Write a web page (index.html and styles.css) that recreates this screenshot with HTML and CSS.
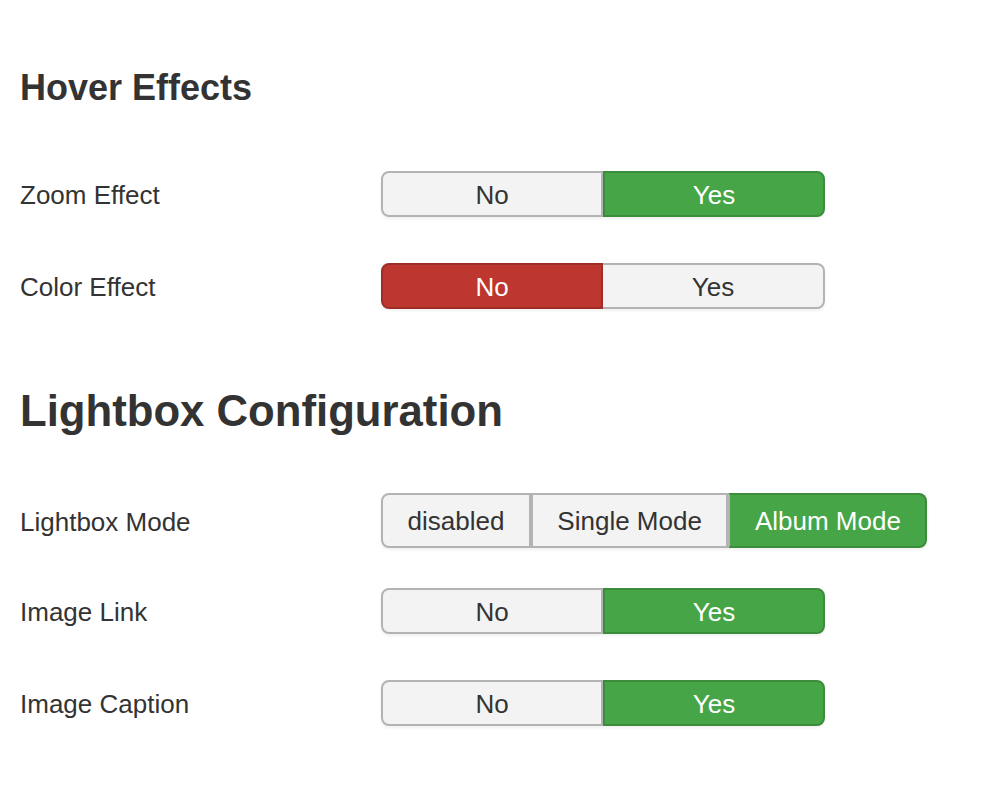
FILE: index.html
```html
<!DOCTYPE html>
<html lang="en">
<head>
    <meta charset="UTF-8">
    <meta name="viewport" content="width=device-width, initial-scale=1.0">
    <title>Gallery Options</title>
    <link rel="stylesheet" href="styles.css">
</head>
<body>

<form id="optionsForm">
    <h3 class="section-title">Hover Effects</h3>

    <div class="control-group">
        <label class="control-label">Zoom Effect</label>
        <div class="btn-group toggle">
            <button type="button" class="btn">No</button>
            <button type="button" class="btn active-yes">Yes</button>
        </div>
    </div>

    <div class="control-group">
        <label class="control-label">Color Effect</label>
        <div class="btn-group toggle">
            <button type="button" class="btn active-no">No</button>
            <button type="button" class="btn">Yes</button>
        </div>
    </div>

    <h2 class="section-title big">Lightbox Configuration</h2>

    <div class="control-group tall">
        <label class="control-label">Lightbox Mode</label>
        <div class="btn-group modes">
            <button type="button" class="btn">disabled</button>
            <button type="button" class="btn">Single Mode</button>
            <button type="button" class="btn active-yes">Album Mode</button>
        </div>
    </div>

    <div class="control-group">
        <label class="control-label">Image Link</label>
        <div class="btn-group toggle">
            <button type="button" class="btn">No</button>
            <button type="button" class="btn active-yes">Yes</button>
        </div>
    </div>

    <div class="control-group">
        <label class="control-label">Image Caption</label>
        <div class="btn-group toggle">
            <button type="button" class="btn">No</button>
            <button type="button" class="btn active-yes">Yes</button>
        </div>
    </div>
</form>

</body>
</html>
```

FILE: styles.css
```css
body {
    font-family: "Liberation Sans", Arial, sans-serif;
    color: #333;
    background-color: #fff;
    margin: 0;
    padding: 0 20px;
}

.section-title {
    font-size: 36px;
    font-weight: bold;
    line-height: 42px;
    margin: 67px 0 62px;
}

.section-title.big {
    font-size: 43.7px;
    line-height: 53px;
    margin: 75px 0 56px;
}

.control-group {
    display: flex;
    align-items: center;
    margin-bottom: 46px;
}

.control-group.tall {
    margin-bottom: 40px;
}

.control-label {
    width: 361px;
    flex-shrink: 0;
    font-size: 26px;
    padding-top: 3px;
}

.btn-group {
    display: flex;
    border-radius: 8px;
    box-shadow: 0 2px 3px rgba(0, 0, 0, 0.06);
}

.btn {
    font-family: inherit;
    font-size: 26px;
    color: #333;
    background-color: #f3f3f3;
    border: 2px solid #b3b3b3;
    margin: 0;
    padding: 2px 24.5px 0;
    cursor: pointer;
}

.btn + .btn {
    border-left: none;
}

.btn:first-child {
    border-radius: 8px 0 0 8px;
}

.btn:last-child {
    border-radius: 0 8px 8px 0;
}

.toggle .btn {
    width: 222px;
    height: 46px;
}

.modes .btn {
    height: 55px;
}

.modes .btn + .btn {
    border-left: 2px solid #b3b3b3;
}

.btn.active-yes {
    background-color: #46a546;
    border: 2px solid #3b8d3b;
    color: #fff;
}

.btn.active-no {
    background-color: #bd362f;
    border: 2px solid #a02e28;
    color: #fff;
}
```
